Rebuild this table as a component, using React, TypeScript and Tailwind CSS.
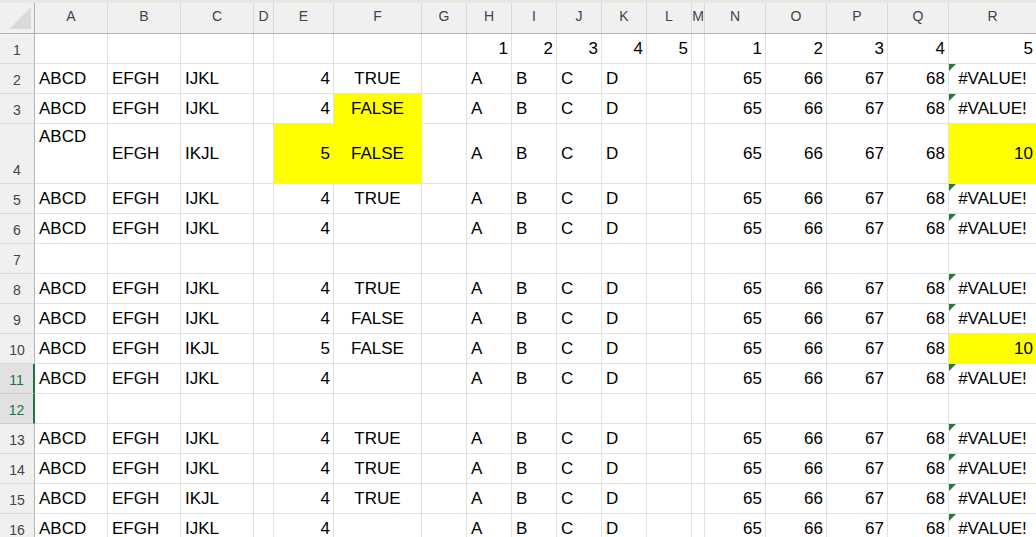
import React from "react";

type Align = "l" | "r" | "c";
type Cell = { t?: string; al?: Align; hl?: boolean; tri?: boolean; top?: boolean };
type Row = { n: number; h: number; cells: Cell[]; mid?: boolean };

const cols = [
  { k: "A", w: 73 },
  { k: "B", w: 73 },
  { k: "C", w: 73 },
  { k: "D", w: 20 },
  { k: "E", w: 60 },
  { k: "F", w: 88 },
  { k: "G", w: 45 },
  { k: "H", w: 45 },
  { k: "I", w: 45 },
  { k: "J", w: 45 },
  { k: "K", w: 45 },
  { k: "L", w: 45 },
  { k: "M", w: 13 },
  { k: "N", w: 61 },
  { k: "O", w: 61 },
  { k: "P", w: 61 },
  { k: "Q", w: 61 },
  { k: "R", w: 88 },
];

const empty = (): Cell => ({});

// one ordinary data row: ABCD / EFGH / C, E number, F bool, letters, 65..68, R
const dataRow = (
  c: string,
  e: string,
  f: string,
  opts: { eHl?: boolean; fHl?: boolean; ten?: boolean; aTop?: boolean } = {}
): Cell[] => [
  { t: "ABCD", al: "l", top: opts.aTop },
  { t: "EFGH", al: "l" },
  { t: c, al: "l" },
  empty(),
  { t: e, al: "r", hl: opts.eHl },
  { t: f, al: "c", hl: opts.fHl },
  empty(),
  { t: "A", al: "l" },
  { t: "B", al: "l" },
  { t: "C", al: "l" },
  { t: "D", al: "l" },
  empty(),
  empty(),
  { t: "65", al: "r" },
  { t: "66", al: "r" },
  { t: "67", al: "r" },
  { t: "68", al: "r" },
  opts.ten ? { t: "10", al: "r", hl: true } : { t: "#VALUE!", al: "c", tri: true },
];

const blankRow = (): Cell[] => cols.map(() => empty());

const rows: Row[] = [
  {
    n: 1,
    h: 30,
    cells: [
      empty(), empty(), empty(), empty(), empty(), empty(), empty(),
      { t: "1", al: "r" }, { t: "2", al: "r" }, { t: "3", al: "r" }, { t: "4", al: "r" }, { t: "5", al: "r" },
      empty(),
      { t: "1", al: "r" }, { t: "2", al: "r" }, { t: "3", al: "r" }, { t: "4", al: "r" }, { t: "5", al: "r" },
    ],
  },
  { n: 2, h: 30, cells: dataRow("IJKL", "4", "TRUE") },
  { n: 3, h: 30, cells: dataRow("IJKL", "4", "FALSE", { fHl: true }) },
  { n: 4, h: 60, mid: true, cells: dataRow("IKJL", "5", "FALSE", { eHl: true, fHl: true, ten: true, aTop: true }) },
  { n: 5, h: 30, cells: dataRow("IJKL", "4", "TRUE") },
  { n: 6, h: 30, cells: dataRow("IJKL", "4", "") },
  { n: 7, h: 30, cells: blankRow() },
  { n: 8, h: 30, cells: dataRow("IJKL", "4", "TRUE") },
  { n: 9, h: 30, cells: dataRow("IJKL", "4", "FALSE") },
  { n: 10, h: 30, cells: dataRow("IKJL", "5", "FALSE", { ten: true }) },
  { n: 11, h: 30, cells: dataRow("IJKL", "4", "") },
  { n: 12, h: 30, cells: blankRow() },
  { n: 13, h: 30, cells: dataRow("IJKL", "4", "TRUE") },
  { n: 14, h: 30, cells: dataRow("IJKL", "4", "TRUE") },
  { n: 15, h: 30, cells: dataRow("IKJL", "4", "TRUE") },
  { n: 16, h: 30, cells: dataRow("IJKL", "4", "") },
];

const alignCls: Record<Align, string> = {
  l: "justify-start pl-[4px]",
  r: "justify-end pr-[3px]",
  c: "justify-center",
};

const selected = [11, 12];

const SheetCell = ({ cell, w, mid }: { cell: Cell; w: number; mid?: boolean }) => {
  const vCls = cell.top ? "items-start pt-[3px]" : mid ? "items-center" : "items-end pb-[4px]";
  return (
    <div
      style={{ width: w }}
      className={`relative flex shrink-0 border-r border-b whitespace-nowrap overflow-visible ${vCls} ${
        alignCls[cell.al ?? "l"]
      } ${cell.hl ? "bg-[#ffff00] border-[#ffff00]" : "bg-white border-[#e1e1e1]"}`}
    >
      {cell.tri && (
        <svg className="absolute left-0 top-0" width="7" height="7" viewBox="0 0 7 7">
          <polygon points="0,0 7,0 0,7" fill="#1e7b34" />
        </svg>
      )}
      {cell.t && <span className="leading-[20px]">{cell.t}</span>}
    </div>
  );
};

export default function App() {
  return (
    <div
      className="w-[1036px] h-[537px] overflow-hidden bg-white text-[17px] text-black"
      style={{ fontFamily: '"Liberation Sans", Arial, sans-serif' }}
    >
      {/* top strip */}
      <div className="h-[3px] bg-[#e8e8e1]" />

      {/* column headers */}
      <div className="flex h-[31px] bg-[#f0f0f0] border-b border-[#b4b4b4] text-[14px] text-[#444]">
        <div className="w-[35px] shrink-0 border-r border-[#b4b4b4] flex items-end justify-end pr-[2px] pb-[3px]">
          <svg width="23" height="23" viewBox="0 0 23 23">
            <polygon points="0,22 22,22 22,0" fill="#dadada" />
          </svg>
        </div>
        {cols.map((c) => (
          <div
            key={c.k}
            style={{ width: c.w }}
            className="shrink-0 border-r border-[#d9d9d9] flex items-center justify-center pb-[5px] leading-[20px]"
          >
            {c.k}
          </div>
        ))}
      </div>

      {/* rows */}
      <div className="flex flex-col">
        {rows.map((r) => {
          const sel = selected.includes(r.n);
          return (
            <div key={r.n} className="flex" style={{ height: r.h }}>
              <div
                className={`w-[35px] shrink-0 border-b flex items-end justify-center pb-[3px] text-[14px] leading-[20px] ${
                  sel
                    ? "bg-[#e1e1e1] text-[#217346] border-r-2 border-r-[#217346] border-b-[#d0d0d0]"
                    : "bg-[#f0f0f0] text-[#444] border-r border-r-[#b4b4b4] border-b-[#d9d9d9]"
                }`}
              >
                {r.n}
              </div>
              {r.cells.map((cell, i) => (
                <SheetCell key={i} cell={cell} w={cols[i].w} mid={r.mid} />
              ))}
            </div>
          );
        })}
      </div>
    </div>
  );
}
